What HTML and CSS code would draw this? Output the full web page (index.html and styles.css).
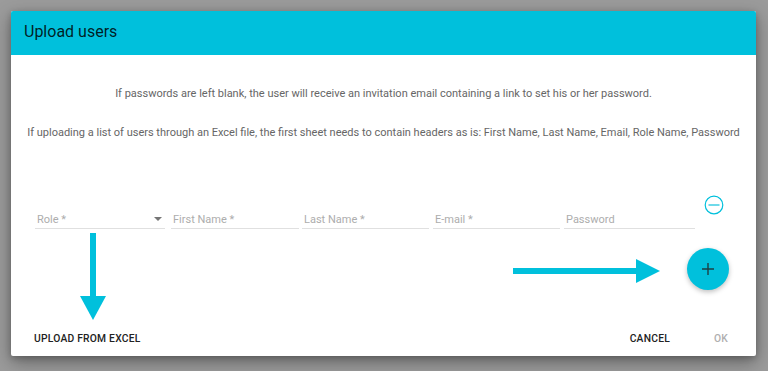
FILE: index.html
```html
<!DOCTYPE html>
<html>
<head>
<meta charset="utf-8">
<link rel="stylesheet" href="styles.css">
</head>
<body>
<div class="dialog">
  <div class="header">Upload users</div>
  <div class="content">
    <p class="note n1">If passwords are left blank, the user will receive an invitation email containing a link to set his or her password.</p>
    <p class="note n2">If uploading a list of users through an Excel file, the first sheet needs to contain headers as is: First Name, Last Name, Email, Role Name, Password</p>
    <div class="row">
      <div class="field role"><span>Role *</span><span class="caret"></span></div>
      <div class="field f2"><span>First Name *</span></div>
      <div class="field f3"><span>Last Name *</span></div>
      <div class="field f4"><span>E-mail *</span></div>
      <div class="field f5"><span>Password</span></div>
      <div class="minus">
        <svg width="20" height="20" viewBox="0 0 20 20"><circle cx="10" cy="10" r="8.8" fill="none" stroke="#00c0dc" stroke-width="1.2"/><line x1="4.5" y1="10" x2="15.5" y2="10" stroke="#6fdaea" stroke-width="2"/></svg>
      </div>
    </div>
    <div class="fabrow">
      <div class="fab">
        <svg width="14" height="14" viewBox="0 0 14 14"><path d="M7 1v12M1 7h12" stroke="#1d3f44" stroke-width="1.4"/></svg>
      </div>
    </div>
  </div>
  <div class="footer">
    <span class="btn upload">UPLOAD FROM EXCEL</span>
    <span class="spacer"></span>
    <span class="btn cancel">CANCEL</span>
    <span class="btn ok">OK</span>
  </div>
  <svg class="arrows" width="745" height="345" viewBox="0 0 745 345">
    <rect x="79" y="222" width="6" height="67" fill="#00c0dc"/>
    <polygon points="69,285 95,285 82,309" fill="#00c0dc"/>
    <rect x="502" y="257" width="127" height="6" fill="#00c0dc"/>
    <polygon points="625,248 625,272 649,260" fill="#00c0dc"/>
  </svg>
</div>
</body>
</html>
```
FILE: styles.css
```css
* { box-sizing: border-box; }
html, body { margin: 0; padding: 0; }
body {
  background: #9b9b9b;
  font-family: Roboto, "Liberation Sans", sans-serif;
  width: 768px;
  height: 371px;
  overflow: hidden;
  padding: 11px 0 0 11px;
}
.dialog {
  position: relative;
  width: 745px;
  height: 345px;
  background: #fff;
  border-radius: 2px;
  box-shadow: 0 6px 18px rgba(0,0,0,0.35), 0 2px 6px rgba(0,0,0,0.2);
  display: flex;
  flex-direction: column;
  overflow: hidden;
}
.header {
  height: 44px;
  background: #00c0dc;
  color: rgba(0,0,0,0.85);
  font-size: 16px;
  line-height: 42px;
  padding-left: 13px;
  flex: none;
}
.content {
  flex: 1;
  display: flex;
  flex-direction: column;
}
.note {
  margin: 0;
  font-size: 11px;
  color: #666;
  text-align: center;
  line-height: 14px;
  white-space: nowrap;
}
.n1 { margin-top: 32px; }
.n2 { margin-top: 25px; }
.row {
  display: flex;
  align-items: flex-end;
  margin-top: 65px;
  padding-left: 24px;
  height: 24px;
}
.field {
  border-bottom: 1px solid #e0e0e0;
  font-size: 11px;
  color: #adadad;
  height: 20px;
  line-height: 16px;
  padding-top: 3px;
  margin-right: 5px;
  display: flex;
  justify-content: space-between;
  padding-left: 2px;
}
.role { width: 130px; margin-right: 6px; }
.f2 { width: 128px; margin-right: 3px; }
.f3 { width: 127px; margin-right: 4px; }
.f4 { width: 127px; margin-right: 4px; }
.f5 { width: 131px; margin-right: 0; }
.caret {
  width: 0; height: 0;
  border-left: 4px solid transparent;
  border-right: 4px solid transparent;
  border-top: 4px solid #757575;
  margin-top: 5px;
  margin-right: 3px;
}
.minus {
  margin-left: 9px;
  align-self: flex-start;
  margin-top: -10px;
  height: 20px;
}
.minus svg { display: block; }
.fabrow {
  display: flex;
  justify-content: flex-end;
  padding-right: 27px;
  margin-top: 19px;
}
.fab {
  width: 42px;
  height: 42px;
  border-radius: 50%;
  background: #00c0dc;
  box-shadow: 0 2px 5px rgba(0,0,0,0.25);
  display: flex;
  align-items: center;
  justify-content: center;
}
.fab svg { display: block; }
.footer {
  display: flex;
  align-items: center;
  height: 36px;
  padding: 0 28px 0 23px;
  flex: none;
}
.btn {
  font-size: 10.3px;
  font-weight: 500;
  letter-spacing: 0.22px;
  color: #222;
}
.spacer { flex: 1; }
.cancel { margin-right: 44px; }
.ok { color: #b0b0b0; }
.arrows {
  position: absolute;
  left: 0;
  top: 0;
  pointer-events: none;
}
```
